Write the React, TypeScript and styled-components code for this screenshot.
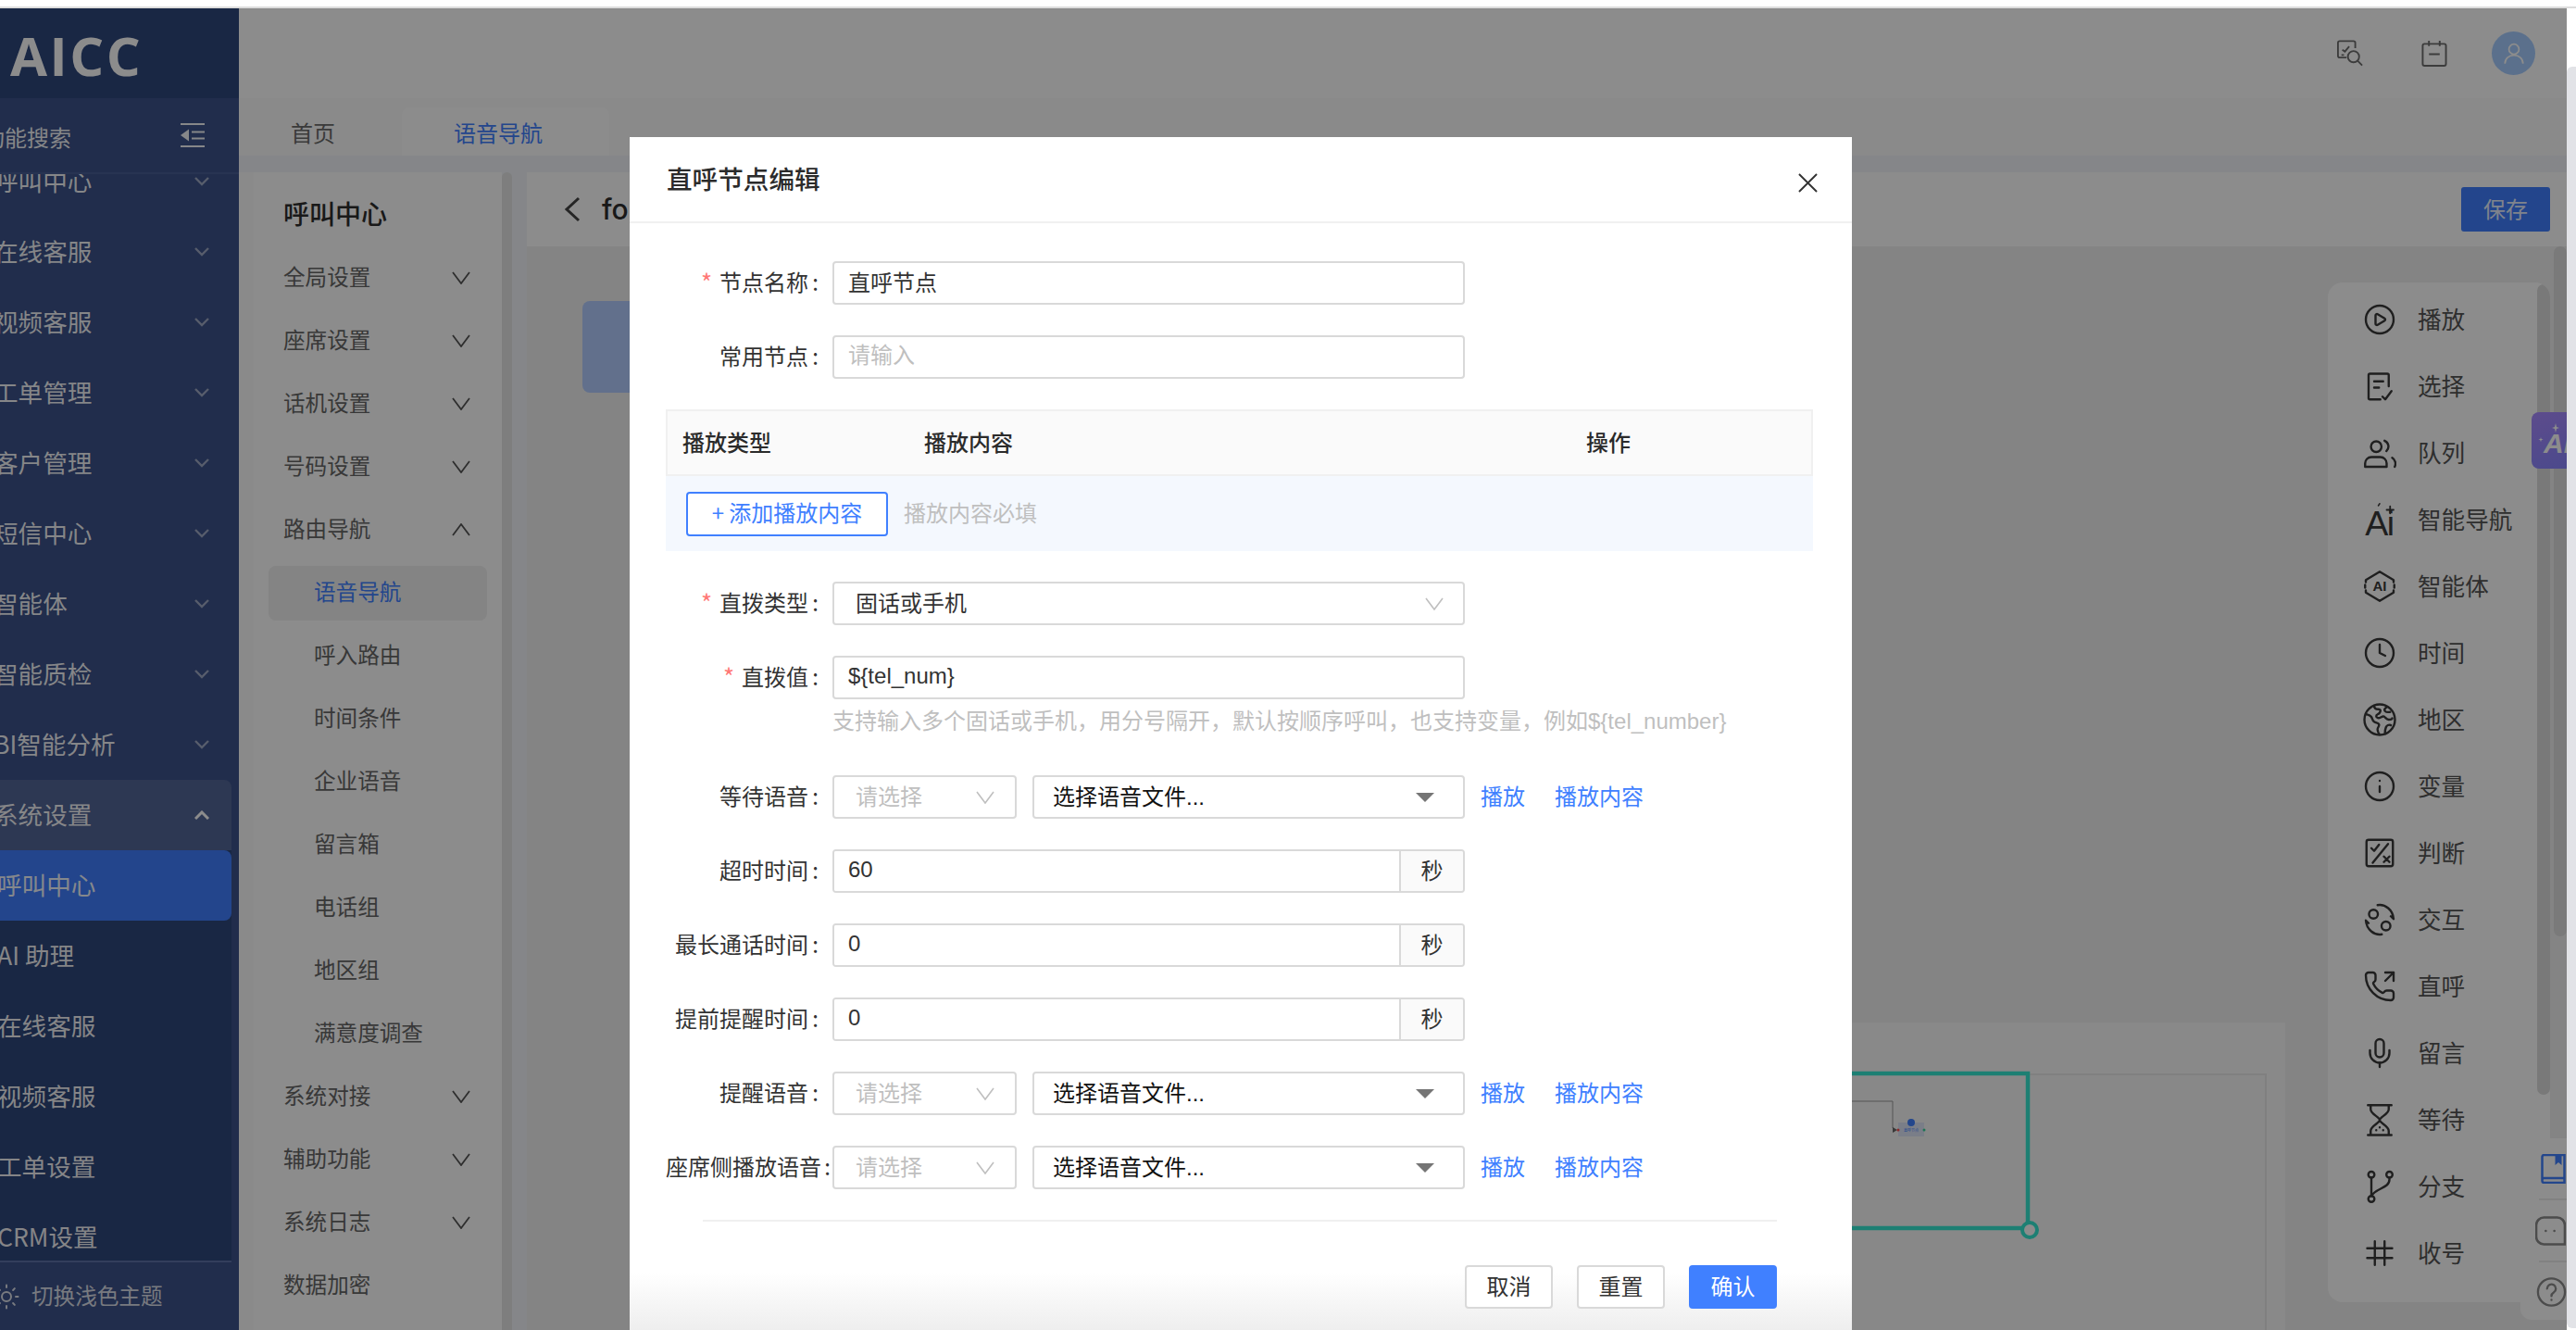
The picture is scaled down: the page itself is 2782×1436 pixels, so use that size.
import { ReactNode } from 'react'
import styled, { createGlobalStyle } from 'styled-components'
import { CirclePlay, Clock, Info, Mic, PhoneOutgoing, Sun } from 'lucide-react'

const FONT = `"Liberation Sans", "Noto Sans CJK SC", "Noto Sans", sans-serif`
const CJK = `"Noto Sans CJK SC", "Noto Sans", sans-serif`

const GlobalStyle = createGlobalStyle`
  html, body {
    margin: 0;
    padding: 0;
    background: #fff;
  }
  body {
    font-family: ${CJK};
    color: #333;
  }
  * {
    box-sizing: border-box;
  }
`

/* small drawn icons */
const Chevron = ({ up, thick }: { up?: boolean; thick?: boolean }) => (
  <MenuChevron viewBox="0 0 16 10" $thick={thick}>
    <path d={up ? 'M1 9l7-7 7 7' : 'M1 1l7 7 7-7'} />
  </MenuChevron>
)

const ThinChevron = ({ up }: { up?: boolean }) => (
  <NavChevron viewBox="0 0 20 14">
    <path d={up ? 'M1 13l9-12 9 12' : 'M1 1l9 12 9-12'} />
  </NavChevron>
)

const SelectChevron = () => (
  <FieldChevron viewBox="0 0 20 14">
    <path d="M1 1l9 12 9-12" />
  </FieldChevron>
)

const DocCheckIcon = () => (
  <svg viewBox="0 0 24 24">
    <path d="M18.500 12V4a1 1 0 0 0-1-1H5a1 1 0 0 0-1 1v16.500a1 1 0 0 0 1 1h7.500M8 8.500h6.500M8 13h3.500M14 19.500l2 2 4.500-6" />
  </svg>
)
const QueueIcon = () => (
  <svg viewBox="0 0 24 24">
    <circle cx="9.500" cy="7.500" r="3.800" />
    <path d="M1.500 22v-2.500a4.500 4.500 0 0 1 4.500-4.500h6.500a4.500 4.500 0 0 1 4.500 4.500V22zM15.500 3.200a4.500 4.500 0 0 1 1.300 7.500M21 15.500a5 5 0 0 1 1.800 6.500" />
  </svg>
)
const AiTextIcon = () => (
  <svg viewBox="0 0 24 24">
    <IconText x="1.500" y="23" fontSize="25" fontWeight="400" letterSpacing="-1">Ai</IconText>
    <path d="M19.500 2.500v5M17 5h5" strokeWidth="1.200" />
    <path d="M12 .5l-1 1.500" strokeWidth="1" />
  </svg>
)
const HexAiIcon = () => (
  <svg viewBox="0 0 24 24">
    <path d="M2 9V7.500L12 1.500l10 6V9M22 15v1.500l-10 6-10-6V15M1.500 11v2M22.500 11v2" />
    <IconText x="12" y="15.500" fontSize="10" fontWeight="700" textAnchor="middle">AI</IconText>
  </svg>
)
const EarthIcon = () => (
  <svg viewBox="0 0 24 24">
    <circle cx="12" cy="12" r="11" />
    <path d="M2 8c2 .5 3 .5 4 2s.5 2.500 2 3.500 3 .5 3.500 2-1.500 2-1 4 .5 2.500 1 2.500M8 2c0 2 1.500 2.500 3 2.500s2 1 1 2.500-2.500 1-2.500 2.500 2 1.500 3 1 2-1.500 3-.5 1.500 2 3 2 2.500-.5 2.500-1M17 3c-1.500 1-2 2-1 3s2.500.5 3.500.5M20 16c-1.500-.5-3 0-3.500 1.500s-1 3-.5 4.500" />
  </svg>
)
const PercentBoxIcon = () => (
  <svg viewBox="0 0 24 24">
    <rect x="2.500" y="2.500" width="19" height="19" rx="1.500" />
    <path d="M18 5.500L7 19M6 8.500l2 2 3.500-4.500M15 14.500l4 4M19 14.500l-4 4" />
  </svg>
)
const InteractIcon = () => (
  <svg viewBox="0 0 24 24">
    <circle cx="7.500" cy="8" r="3.200" />
    <circle cx="16.500" cy="16.500" r="3.200" />
    <path d="M10.500 1.500c5.500-1 11 3.500 11.500 10l-2-2M13.500 22.500c-5.500 1-11-3.500-11.500-10l2 2" />
  </svg>
)
const HourglassIcon = () => (
  <svg viewBox="0 0 24 24">
    <path d="M3.500 1.500h17M3.500 23h17M5.500 1.500v3c0 3.500 6.500 5.500 6.500 7.700s-6.500 4.300-6.500 7.800v3M18.500 1.500v3c0 3.500-6.500 5.500-6.500 7.700s6.500 4.300 6.500 7.800v3" />
    <path d="M9.500 19.500h.01M14.500 19.500h.01M12 17.500h.01" />
  </svg>
)
const BranchIcon = () => (
  <svg viewBox="0 0 24 24">
    <circle cx="6" cy="3.500" r="2.200" />
    <circle cx="19" cy="3.500" r="2.200" />
    <circle cx="6" cy="21" r="2.200" />
    <path d="M6 5.700v13M19 5.700V7c0 3.500-3 5-6 6.500s-6 3-7 5.500" />
  </svg>
)
const HashIcon = () => (
  <svg viewBox="0 0 24 24">
    <path d="M8.500 3.500v17M15.500 3.500v17M3 8.500h18M3 15.500h18" />
  </svg>
)

const panelIcons: { label: string; icon: ReactNode }[] = [
  { label: '播放', icon: <CirclePlay /> },
  { label: '选择', icon: <DocCheckIcon /> },
  { label: '队列', icon: <QueueIcon /> },
  { label: '智能导航', icon: <AiTextIcon /> },
  { label: '智能体', icon: <HexAiIcon /> },
  { label: '时间', icon: <Clock /> },
  { label: '地区', icon: <EarthIcon /> },
  { label: '变量', icon: <Info /> },
  { label: '判断', icon: <PercentBoxIcon /> },
  { label: '交互', icon: <InteractIcon /> },
  { label: '直呼', icon: <PhoneOutgoing /> },
  { label: '留言', icon: <Mic /> },
  { label: '等待', icon: <HourglassIcon /> },
  { label: '分支', icon: <BranchIcon /> },
  { label: '收号', icon: <HashIcon /> },
]

const mainMenu = ['呼叫中心', '在线客服', '视频客服', '工单管理', '客户管理', '短信中心', '智能体', '智能质检', 'BI智能分析']
const subMenu = ['呼叫中心', 'AI 助理', '在线客服', '视频客服', '工单设置', 'CRM设置']
const navTop = ['全局设置', '座席设置', '话机设置', '号码设置']
const navRoute = ['语音导航', '呼入路由', '时间条件', '企业语音', '留言箱', '电话组', '地区组', '满意度调查']
const navBottom = ['系统对接', '辅助功能', '系统日志']

const FieldLabel = ({ text, required, compact }: { text: string; required?: boolean; compact?: boolean }) => (
  <Label $compact={compact}>
    {required && <Star>*</Star>}
    {text}
    <Colon>:</Colon>
  </Label>
)

const VoiceRow = ({ label, compact }: { label: string; compact?: boolean }) => (
  <Row>
    <FieldLabel text={label} compact={compact} />
    <SmallSelect>
      <Placeholder>请选择</Placeholder>
      <SelectChevron />
    </SmallSelect>
    <FileSelect>
      <SelectText>选择语音文件...</SelectText>
      <Caret />
    </FileSelect>
    <LinkGroup>
      <TextLink>播放</TextLink>
      <TextLink>播放内容</TextLink>
    </LinkGroup>
  </Row>
)

const SecondsRow = ({ label, value }: { label: string; value: string }) => (
  <Row>
    <FieldLabel text={label} />
    <AddonField>
      <AddonInput readOnly value={value} />
      <Addon>秒</Addon>
    </AddonField>
  </Row>
)

const App = () => {
  return (
    <Page>
      <GlobalStyle />
      <TopStrip />
      <Body>
        <Shell>
          <Sidebar>
            <Logo>AICC</Logo>
            <SearchRow>
              <SearchText>功能搜索</SearchText>
              <OutdentIcon viewBox="0 0 26 26">
                <path d="M0 1h26M0 25h26M12 9.500h14M12 16.500h14" />
                <path d="M9 6.500L0 13l9 6.500z" fill="currentColor" stroke="none" />
              </OutdentIcon>
            </SearchRow>
            <MenuArea>
              <MenuList>
                {mainMenu.map((item) => (
                  <MenuItem key={item}>
                    <MenuText>{item}</MenuText>
                    <Chevron />
                  </MenuItem>
                ))}
                <MenuItem $open>
                  <MenuText>系统设置</MenuText>
                  <Chevron up thick />
                </MenuItem>
                <SubList>
                  {subMenu.map((item) => (
                    <SubItem key={item} $active={item === '呼叫中心'}>
                      <SubText>{item}</SubText>
                    </SubItem>
                  ))}
                </SubList>
              </MenuList>
            </MenuArea>
            <SideFooter>
              <Sun size={30} strokeWidth={1.6} />
              <FooterText>切换浅色主题</FooterText>
            </SideFooter>
          </Sidebar>

          <Main>
            <TopBar>
              <ToolIcon viewBox="0 0 30 30" $gap={63}>
                <path d="M11 20H3a2 2 0 0 1-2-2V3a2 2 0 0 1 2-2h16a2 2 0 0 1 2 2v6M6 11l3 2 5-6M5 17h3" />
                <circle cx="19" cy="19" r="6.500" />
                <path d="M24 24l5 5" />
              </ToolIcon>
              <ToolIcon viewBox="0 0 28 30" $gap={48}>
                <rect x="1" y="4.500" width="26" height="24.500" rx="2" />
                <path d="M8 1v6M20 1v6M8 16h12" />
              </ToolIcon>
              <Avatar>
                <svg viewBox="0 0 24 24">
                  <circle cx="12" cy="7.500" r="5" />
                  <path d="M3 22c0-5 4-8.500 9-8.500s9 3.500 9 8.500" />
                </svg>
              </Avatar>
            </TopBar>
            <TabStrip>
              <Tab>首页</Tab>
              <Tab $active>语音导航</Tab>
            </TabStrip>
            <ContentRow>
              <SubNav>
                <NavTitle>呼叫中心</NavTitle>
                {navTop.map((item) => (
                  <NavItem key={item}>
                    {item}
                    <ThinChevron />
                  </NavItem>
                ))}
                <NavItem>
                  路由导航
                  <ThinChevron up />
                </NavItem>
                {navRoute.map((item) => (
                  <NavItem key={item} $child $active={item === '语音导航'}>
                    {item}
                  </NavItem>
                ))}
                {navBottom.map((item) => (
                  <NavItem key={item}>
                    {item}
                    <ThinChevron />
                  </NavItem>
                ))}
                <NavItem>数据加密</NavItem>
              </SubNav>
              <NavScrollbar />
              <Editor>
                <EditorHeader>
                  <BackIcon viewBox="0 0 18 28">
                    <path d="M16 2L3 14l13 12" />
                  </BackIcon>
                  <FlowName>fo</FlowName>
                  <SaveButton>保存</SaveButton>
                </EditorHeader>
                <Canvas>
                  <StartNode />
                  <FlowPanel>
                    <FlowFrame />
                  </FlowPanel>
                  <FlowDrawing viewBox="0 0 240 200">
                    <path d="M-20 13H221V180H-20" fill="none" stroke="#36e8d2" strokeWidth="4.500" />
                    <circle cx="223" cy="182" r="8" fill="#fff" stroke="#36e8d2" strokeWidth="4" />
                    <path d="M0 43H75V72" fill="none" stroke="#999" strokeWidth="1" />
                    <path d="M75 71l5 3-5 3z" fill="#666" />
                    <rect x="81" y="66" width="28" height="15" fill="#dfe6f8" />
                    <circle cx="95" cy="66" r="4" fill="#4080ff" />
                    <circle cx="81" cy="74" r="1.500" fill="#ff4d4f" />
                    <circle cx="109" cy="74" r="1.500" fill="#36d399" />
                    <text x="95" y="76" fontSize="4" textAnchor="middle" fill="#4080ff" fontFamily={CJK}>
                      直呼节点
                    </text>
                  </FlowDrawing>
                  <CanvasScrollbar />
                  <IconPanel>
                    {panelIcons.map((item) => (
                      <PanelItem key={item.label}>
                        <PanelIcon>{item.icon}</PanelIcon>
                        <PanelText>{item.label}</PanelText>
                      </PanelItem>
                    ))}
                    <PanelScrollbar />
                  </IconPanel>
                  <AiBadge>
                    <svg viewBox="0 0 38 61">
                      <text x="13" y="44" fontSize="30" fontWeight="800" fontStyle="italic" fill="#fff" fontFamily={FONT}>
                        Ai
                      </text>
                      <path d="M26 12l1 4 3 1-3 1-1 4-1-4-3-1 3-1zM10 27l.6 2 2 .6-2 .6-.6 2-.6-2-2-.6 2-.6z" fill="#fff" />
                    </svg>
                  </AiBadge>
                  <SideWidget>
                    <WidgetIcon viewBox="0 0 26 32" $blue $pad={19}>
                      <path d="M25 26V1H3a2 2 0 0 0-2 2v26a2 2 0 0 0 2 2h22v-5H3a2 2 0 0 0-2 2" />
                      <path d="M15 1h7v11l-3.500-3L15 12z" fill="currentColor" stroke="none" />
                    </WidgetIcon>
                    <WidgetRule />
                    <WidgetIcon viewBox="0 0 32 30" $pad={16}>
                      <path d="M31 29H9a8 8 0 0 1-8-8V9a8 8 0 0 1 8-8h14a8 8 0 0 1 8 8z" />
                      <path d="M11 15h.01M20 15h.01" />
                    </WidgetIcon>
                    <WidgetRule />
                    <WidgetIcon viewBox="0 0 34 34" $pad={17}>
                      <circle cx="17" cy="17" r="15.500" />
                      <path d="M12 13a5 5 0 1 1 7.500 4.500c-1.700 1-2.500 2-2.500 4M17 26v.01" />
                    </WidgetIcon>
                  </SideWidget>
                </Canvas>
              </Editor>
            </ContentRow>
          </Main>

          <Mask />

          <Dialog>
            <DialogHeader>
              <DialogTitle>直呼节点编辑</DialogTitle>
              <CloseIcon viewBox="0 0 22 22">
                <path d="M1 1l20 20M21 1L1 21" />
              </CloseIcon>
            </DialogHeader>
            <DialogBody>
              <Row>
                <FieldLabel text="节点名称" required />
                <Input readOnly value="直呼节点" />
              </Row>
              <Row>
                <FieldLabel text="常用节点" />
                <Input readOnly placeholder="请输入" />
              </Row>
              <PlayTable>
                <TableHead>
                  <span>播放类型</span>
                  <span>播放内容</span>
                  <span>操作</span>
                </TableHead>
                <TableBody>
                  <AddButton>+ 添加播放内容</AddButton>
                  <TableHint>播放内容必填</TableHint>
                </TableBody>
              </PlayTable>
              <Row>
                <FieldLabel text="直拨类型" required />
                <WideSelect>
                  <SelectText>固话或手机</SelectText>
                  <SelectChevron />
                </WideSelect>
              </Row>
              <ValueRow>
                <FieldLabel text="直拨值" required />
                <ValueColumn>
                  <Input readOnly value="${tel_num}" />
                  <HelpText>支持输入多个固话或手机，用分号隔开，默认按顺序呼叫，也支持变量，例如{'${tel_number}'}</HelpText>
                </ValueColumn>
              </ValueRow>
              <VoiceRow label="等待语音" />
              <SecondsRow label="超时时间" value="60" />
              <SecondsRow label="最长通话时间" value="0" />
              <SecondsRow label="提前提醒时间" value="0" />
              <VoiceRow label="提醒语音" />
              <VoiceRow label="座席侧播放语音" compact />
              <FooterRule />
              <DialogFooter>
                <GhostButton>取消</GhostButton>
                <GhostButton>重置</GhostButton>
                <PrimaryButton>确认</PrimaryButton>
              </DialogFooter>
            </DialogBody>
            <BottomFade />
          </Dialog>
        </Shell>
        <Gutter>
          <GutterTrack />
        </Gutter>
      </Body>
    </Page>
  )
}

const Page = styled.div`
  width: 2782px;
  height: 1436px;
  display: flex;
  flex-direction: column;
  overflow: hidden;
  background: #fff;
`

const TopStrip = styled.div`
  height: 9px;
  flex: none;
  background: #fff;
  border-bottom: 2px solid #ddd;
`

const Body = styled.div`
  flex: 1;
  min-height: 0;
  display: flex;
`

const Shell = styled.div`
  position: relative;
  flex: none;
  width: 2772px;
  display: flex;
  overflow: hidden;
`

const Gutter = styled.div`
  flex: 1;
  padding: 63px 0 2px;
  background: #fff;
`

const GutterTrack = styled.div`
  height: 100%;
  background: #e2e3e7;
  border-radius: 6px 0 0 6px;
`

const Sidebar = styled.aside`
  flex: none;
  width: 258px;
  display: flex;
  flex-direction: column;
  overflow: hidden;
  background: #3c528a;
  color: rgba(255, 255, 255, 0.95);
`

const Logo = styled.div`
  flex: none;
  height: 97px;
  display: flex;
  align-items: center;
  padding: 4px 0 0 11px;
  background: #2f477c;
  color: #fff;
  font-family: "Open Sans", sans-serif;
  font-size: 58px;
  font-weight: 700;
  letter-spacing: 2.5px;
`

const SearchRow = styled.div`
  flex: none;
  height: 82px;
  display: flex;
  align-items: center;
  justify-content: space-between;
  padding-right: 37px;
  border-bottom: 2px solid #4a5f96;
`

const SearchText = styled.span`
  margin-left: -19px;
  padding-top: 4px;
  font-size: 24px;
  line-height: 32px;
  white-space: nowrap;
`

const OutdentIcon = styled.svg`
  width: 26px;
  height: 26px;
  fill: none;
  stroke: currentColor;
  stroke-width: 2;
`

const MenuArea = styled.div`
  flex: 1;
  min-height: 0;
  overflow: hidden;
`

const MenuList = styled.div`
  margin: -30px 0 0 -12px;
  padding-right: 8px;
`

const MenuItem = styled.div<{ $open?: boolean }>`
  height: 76px;
  display: flex;
  align-items: center;
  justify-content: space-between;
  padding-right: 24px;
  border-radius: 8px 8px 0 0;
  background: ${(p) => (p.$open ? '#526697' : 'transparent')};
`

const MenuText = styled.span`
  margin-left: 5px;
  padding-bottom: 3px;
  font-size: 26.6px;
  line-height: 36px;
  white-space: nowrap;
`

const MenuChevron = styled.svg<{ $thick?: boolean }>`
  width: 16px;
  height: 10px;
  fill: none;
  stroke: rgba(255, 255, 255, ${(p) => (p.$thick ? 1 : 0.5)});
  stroke-width: ${(p) => (p.$thick ? 3 : 2.4)};
`

const SubList = styled.div`
  background: #2f477c;
`

const SubItem = styled.div<{ $active?: boolean }>`
  height: 76px;
  display: flex;
  align-items: center;
  border-radius: 8px;
  background: ${(p) => (p.$active ? '#407fff' : 'transparent')};
`

const SubText = styled(MenuText)`
  margin-left: 9px;
`

const SideFooter = styled.div`
  flex: none;
  height: 75px;
  margin-right: 8px;
  display: flex;
  align-items: center;
  gap: 12px;
  border-top: 2px solid #5d71a8;
  color: rgba(255, 255, 255, 0.82);

  svg {
    flex: none;
    margin-left: -8px;
  }
`

const FooterText = styled.span`
  padding-bottom: 4px;
  font-size: 23.6px;
  white-space: nowrap;
`

const Main = styled.main`
  flex: 1;
  min-width: 0;
  display: flex;
  flex-direction: column;
  background: #f2f5f9;
`

const TopBar = styled.header`
  flex: none;
  height: 97px;
  display: flex;
  align-items: center;
  justify-content: flex-end;
  padding-right: 34px;
  background: #fff;
`

const ToolIcon = styled.svg<{ $gap: number }>`
  width: 28px;
  height: 29px;
  margin-right: ${(p) => p.$gap}px;
  fill: none;
  stroke: #6e6e6e;
  stroke-width: 2;
`

const Avatar = styled.div`
  width: 47px;
  height: 47px;
  display: flex;
  align-items: center;
  justify-content: center;
  border-radius: 50%;
  background: #a6cdff;

  svg {
    width: 26px;
    height: 26px;
    fill: none;
    stroke: #fff;
    stroke-width: 1.6;
  }
`

const TabStrip = styled.nav`
  flex: none;
  height: 62px;
  display: flex;
  align-items: flex-end;
  background: #fbfbfb;
`

const Tab = styled.div<{ $active?: boolean }>`
  height: 52px;
  display: flex;
  align-items: center;
  width: ${(p) => (p.$active ? '224px' : '176px')};
  padding-left: 56px;
  border-radius: 8px 8px 0 0;
  font-size: 24px;
  background: ${(p) => (p.$active ? '#fff' : 'transparent')};
  color: ${(p) => (p.$active ? '#4080ff' : '#6a6a6a')};
`

const ContentRow = styled.div`
  flex: 1;
  min-height: 0;
  display: flex;
  padding-top: 18px;
`

const SubNav = styled.div`
  flex: none;
  width: 284px;
  display: flex;
  flex-direction: column;
  padding-top: 12px;
  border-left: 16px solid #fbfbfb;
  overflow: hidden;
  background: #fff;
`

const NavScrollbar = styled.div`
  flex: none;
  width: 11px;
  border-radius: 6px 6px 0 0;
  background: #e6e6e6;
`

const NavTitle = styled.div`
  flex: none;
  height: 68px;
  display: flex;
  align-items: center;
  padding: 0 0 4px 32px;
  font-size: 28px;
  font-weight: 500;
  color: #2e2e2e;
`

const NavItem = styled.div<{ $child?: boolean; $active?: boolean }>`
  flex: none;
  height: 59px;
  margin: 4.5px 16px;
  display: flex;
  align-items: center;
  justify-content: space-between;
  padding: 0 18px 4px ${(p) => (p.$child ? '49px' : '16px')};
  border-radius: 8px;
  font-size: 23.6px;
  background: ${(p) => (p.$active ? '#f0f0f0' : 'transparent')};
  color: ${(p) => (p.$active ? '#4080ff' : '#666')};
`

const NavChevron = styled.svg`
  width: 20px;
  height: 14px;
  margin-top: 4px;
  fill: none;
  stroke: #555;
  stroke-width: 1.8;
`

const Editor = styled.div`
  flex: 1;
  min-width: 0;
  display: flex;
  flex-direction: column;
  padding-left: 16px;
`

const EditorHeader = styled.div`
  flex: none;
  height: 80px;
  display: flex;
  align-items: center;
  padding: 0 18px 0 40px;
  background: #fff;
`

const BackIcon = styled.svg`
  width: 18px;
  height: 28px;
  fill: none;
  stroke: #444;
  stroke-width: 3;
`

const FlowName = styled.span`
  flex: 1;
  margin-left: 23px;
  font-family: Inter, sans-serif;
  font-size: 30px;
  font-weight: 500;
  color: #2e2e2e;
`

const SaveButton = styled.button`
  width: 96px;
  height: 48px;
  padding: 0 0 4px;
  border: 0;
  border-radius: 3px;
  background: #407fff;
  color: rgba(255, 255, 255, 0.9);
  font-family: ${CJK};
  font-size: 24px;
`

const Canvas = styled.div`
  position: relative;
  flex: 1;
  min-height: 0;
  background: #f1f1f1;
`

const StartNode = styled.div`
  position: absolute;
  left: 60px;
  top: 59px;
  width: 200px;
  height: 99px;
  border-radius: 8px;
  background: #b2ccff;
`

const FlowPanel = styled.div`
  position: absolute;
  left: 1000px;
  right: 304px;
  top: 838px;
  bottom: 0;
  padding: 55px 20px 0 0;
  background: #fafafa;
`

const FlowFrame = styled.div`
  height: 100%;
  border: solid #eaeaea;
  border-width: 2px 2px 0 0;
  background: #f8f8f8;
`

const FlowDrawing = styled.svg`
  position: absolute;
  left: 1400px;
  top: 880px;
  width: 240px;
  height: 200px;
  overflow: visible;
`

const CanvasScrollbar = styled.div`
  position: absolute;
  right: 0;
  top: 0;
  width: 14px;
  height: 745px;
  border-radius: 7px;
  background: #dedede;
`

const IconPanel = styled.div`
  position: absolute;
  right: 18px;
  top: 39px;
  width: 240px;
  height: 1101px;
  padding-top: 4px;
  border-radius: 16px;
  overflow: hidden;
  background: #fff;
`

const PanelScrollbar = styled.div`
  position: absolute;
  right: 0;
  top: 2px;
  width: 14px;
  height: 875px;
  border-radius: 7px;
  background: #dcdcdc;
`

const PanelItem = styled.div`
  height: 72px;
  display: flex;
  align-items: center;
  gap: 23px;
  padding-left: 38px;
  color: #555;
`

const PanelText = styled.span`
  padding-bottom: 4px;
  font-size: 25.6px;
`

const PanelIcon = styled.span`
  flex: none;
  width: 36px;
  height: 36px;
  color: #3a3a3a;

  svg {
    display: block;
    width: 36px;
    height: 36px;
    fill: none;
    stroke: currentColor;
    stroke-width: 1.6;
    stroke-linecap: round;
    stroke-linejoin: round;
  }
`

const IconText = styled.text`
  font-family: ${FONT};
  fill: currentColor;
  stroke: none;
`

const AiBadge = styled.div`
  position: absolute;
  right: 0;
  top: 179px;
  width: 38px;
  height: 61px;
  border-radius: 8px 0 0 8px;
  overflow: hidden;
  background: linear-gradient(160deg, #a98aff, #8a86ff);

  svg {
    display: block;
    width: 38px;
    height: 61px;
  }
`

const SideWidget = styled.div`
  position: absolute;
  right: 0;
  top: 963px;
  width: 50px;
  height: 196px;
  display: flex;
  flex-direction: column;
  justify-content: space-between;
  padding: 17px 0 14px;
  border-radius: 12px 0 0 12px;
  overflow: hidden;
  background: #fff;
`

const WidgetIcon = styled.svg<{ $blue?: boolean; $pad: number }>`
  flex: none;
  width: 33px;
  height: 32px;
  margin-left: ${(p) => p.$pad}px;
  fill: none;
  stroke-width: 2.5;
  stroke-linecap: round;
  color: #4080ff;
  stroke: ${(p) => (p.$blue ? '#4080ff' : '#8a8a8a')};
`

const WidgetRule = styled.div`
  height: 2px;
  margin-left: 20px;
  background: #ececec;
`

const Mask = styled.div`
  position: absolute;
  inset: 0;
  background: rgba(0, 0, 0, 0.45);
`

const Dialog = styled.section`
  position: absolute;
  left: 680px;
  top: 139px;
  bottom: 0;
  width: 1320px;
  overflow: hidden;
  background: #fff;
  font-size: 24px;
  color: #333;
`

const DialogHeader = styled.header`
  height: 93px;
  display: flex;
  align-items: center;
  justify-content: space-between;
  padding: 0 37px 0 40px;
  border-bottom: 2px solid #f0f0f0;
`

const DialogTitle = styled.h2`
  margin: 0;
  padding-bottom: 4px;
  font-size: 27.6px;
  font-weight: 500;
  color: #2b2b2b;
`

const CloseIcon = styled.svg`
  width: 21px;
  height: 21px;
  margin-top: 8px;
  fill: none;
  stroke: #333;
  stroke-width: 2;
`

const DialogBody = styled.div`
  padding: 41px 81px 0 39px;
`

const Row = styled.div`
  height: 47px;
  margin-bottom: 33px;
  display: flex;
  align-items: center;
`

const ValueRow = styled(Row)`
  height: auto;
  margin-bottom: 41px;
  align-items: flex-start;
`

const ValueColumn = styled.div`
  display: flex;
  flex-direction: column;
`

const Label = styled.label<{ $compact?: boolean }>`
  flex: none;
  width: 180px;
  height: 47px;
  display: flex;
  align-items: center;
  justify-content: flex-end;
  padding: 0 ${(p) => (p.$compact ? '2px' : '15px')} 4px 0;
  white-space: nowrap;
  color: #333;
`

const Star = styled.span`
  width: 20px;
  color: #ff7875;
  font-size: 26px;
  line-height: 1;
  text-align: left;
`

const Colon = styled.span`
  width: 11px;
  text-align: right;
`

const Input = styled.input`
  width: 683px;
  height: 47px;
  padding: 0 15px 4px;
  border: 2px solid #d9d9d9;
  border-radius: 4px;
  outline: none;
  font-family: ${FONT};
  font-size: 24px;
  color: #333;

  &::placeholder {
    color: #bfbfbf;
  }
`

const HelpText = styled.div`
  margin-top: 7px;
  line-height: 34px;
  font-family: ${FONT};
  white-space: nowrap;
  color: #bfbfbf;
`

const PlayTable = styled.div`
  width: 1239px;
  margin-bottom: 33px;
`

const TableHead = styled.div`
  height: 72px;
  display: grid;
  grid-template-columns: 261px 715px 1fr;
  align-items: center;
  padding: 0 0 4px 16px;
  border: 2px solid #f0f0f0;
  background: #fafafa;
  font-weight: 500;
  color: #2b2b2b;
`

const TableBody = styled.div`
  height: 81px;
  display: flex;
  align-items: center;
  gap: 17px;
  padding-left: 22px;
  background: #f4f8fe;
`

const AddButton = styled.button`
  width: 218px;
  height: 48px;
  padding: 0 0 4px;
  border: 2px solid #4080ff;
  border-radius: 4px;
  background: #fff;
  font-family: ${CJK};
  font-size: 24px;
  color: #4080ff;
`

const TableHint = styled.span`
  padding-bottom: 4px;
  color: #bfbfbf;
`

const SelectBox = styled.div`
  height: 47px;
  display: flex;
  align-items: center;
  justify-content: space-between;
  border: 2px solid #d9d9d9;
  border-radius: 4px;
  background: #fff;
  white-space: nowrap;
`

const WideSelect = styled(SelectBox)`
  width: 683px;
  padding: 0 21px 0 23px;
`

const SmallSelect = styled(SelectBox)`
  width: 199px;
  padding: 0 22px 0 23px;
`

const FileSelect = styled(SelectBox)`
  width: 467px;
  margin-left: 17px;
  padding: 0 31px 0 20px;
  color: #111;
`

const SelectText = styled.span`
  padding-bottom: 4px;
  font-family: ${FONT};
`

const Placeholder = styled.span`
  padding-bottom: 4px;
  color: #bfbfbf;
`

const FieldChevron = styled.svg`
  width: 20px;
  height: 14px;
  fill: none;
  stroke: #bfbfbf;
  stroke-width: 1.6;
`

const Caret = styled.span`
  width: 0;
  height: 0;
  border-style: solid;
  border-width: 10px 10.5px 0;
  border-color: #757575 transparent transparent;
`

const LinkGroup = styled.div`
  display: flex;
  gap: 32px;
  margin-left: 17px;
  padding-bottom: 4px;
`

const TextLink = styled.a`
  color: #4080ff;
  white-space: nowrap;
`

const AddonField = styled.div`
  width: 683px;
  height: 47px;
  display: flex;
  border: 2px solid #d9d9d9;
  border-radius: 4px;
  overflow: hidden;
`

const AddonInput = styled.input`
  flex: 1;
  min-width: 0;
  padding: 0 15px 4px;
  border: 0;
  outline: none;
  font-family: ${FONT};
  font-size: 24px;
  color: #333;
`

const Addon = styled.span`
  flex: none;
  width: 69px;
  display: flex;
  align-items: center;
  justify-content: center;
  padding-bottom: 4px;
  border-left: 2px solid #d9d9d9;
  background: #fafafa;
`

const FooterRule = styled.div`
  height: 2px;
  margin: 0 0 47px 40px;
  background: #f0f0f0;
`

const DialogFooter = styled.div`
  position: relative;
  z-index: 1;
  display: flex;
  justify-content: flex-end;
  gap: 26px;
`

const GhostButton = styled.button`
  width: 95px;
  height: 47px;
  padding: 0 0 4px;
  border: 2px solid #d9d9d9;
  border-radius: 4px;
  background: #fff;
  font-family: ${CJK};
  font-size: 24px;
  color: #333;
`

const PrimaryButton = styled(GhostButton)`
  border-color: #4080ff;
  background: #4080ff;
  color: #fff;
`

const BottomFade = styled.div`
  position: absolute;
  left: 0;
  right: 0;
  bottom: 0;
  height: 62px;
  background: linear-gradient(to bottom, rgba(238, 238, 238, 0), #eee);
`

export default App
